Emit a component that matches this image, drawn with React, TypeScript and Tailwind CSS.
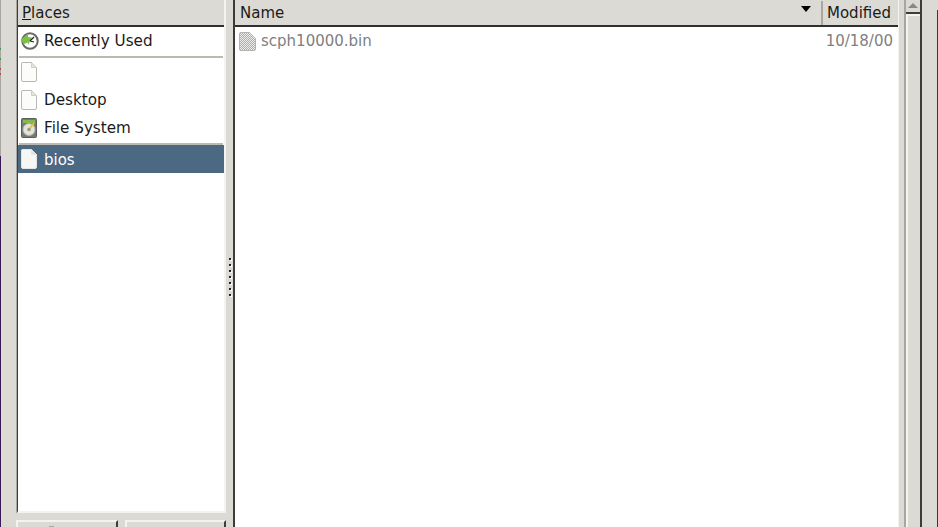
const sans = "font-['DejaVu_Sans','Liberation_Sans',sans-serif]";

const PageIcon = ({ selected }: { selected?: boolean }) => (
  <svg width="16" height="20" viewBox="0 0 16 20" className="shrink-0">
    <path
      d="M1 .5 H10.5 L15.5 5.5 V18 Q15.5 19.5 14 19.5 H2 Q.5 19.5 .5 18 V1 Z"
      fill={selected ? '#f6f6f4' : '#fcfcfb'}
      stroke={selected ? '#e2e5e8' : '#b9b8b4'}
    />
    <path d="M10.5 .5 V5.5 H15.5 Z" fill="#e4e3df" stroke={selected ? '#e2e5e8' : '#cfcec9'} />
  </svg>
);

const ClockIcon = () => (
  <svg width="19" height="18" viewBox="0 0 19 18" className="-ml-[1px] -mr-[2px] shrink-0">
    <circle cx="10" cy="9" r="7.7" fill="#fff" stroke="#676a63" strokeWidth="2" />
    <path d="M0.5 8 L8 1.5 V5 L12 5.5 L8 13 V10.5 L4 12 Z" fill="#7cc04c" />
    <path d="M10 9 L14 5 M10 9 L14 10" stroke="#222" strokeWidth="1.2" />
  </svg>
);

const DiskIcon = () => (
  <svg width="16" height="20" viewBox="0 0 16 20" className="shrink-0">
    <rect x="0.5" y="0.5" width="15" height="19" rx="1" fill="#767b73" stroke="#5a5d57" />
    <rect x="2" y="2" width="12" height="3" fill="#86b84a" />
    <circle cx="8" cy="11.5" r="6" fill="#e4e4de" stroke="#b5b5ad" />
    <path d="M8 11.5 L13 5" stroke="#e6c53a" strokeWidth="2" />
    <circle cx="8" cy="11.5" r="1.8" fill="#9a9a92" />
  </svg>
);

const BinIcon = () => (
  <svg width="17" height="19" viewBox="0 0 17 19" className="shrink-0">
    <defs>
      <pattern id="dots" width="2" height="2" patternUnits="userSpaceOnUse">
        <rect width="2" height="2" fill="#ececea" />
        <rect width="1" height="1" fill="#aeaeac" />
        <rect x="1" y="1" width="1" height="1" fill="#aeaeac" />
      </pattern>
    </defs>
    <path
      d="M2 .5 H10.5 L16.5 6.5 V17 Q16.5 18.5 15 18.5 H2 Q.5 18.5 .5 17 V2 Q.5 .5 2 .5 Z"
      fill="url(#dots)"
      stroke="#b3b3b0"
    />
  </svg>
);

const Place = ({ icon, label }: { icon: React.ReactNode; label?: string }) => (
  <div className="flex h-[28px] items-center gap-[7px] pl-[3px] text-[15.2px] leading-none text-[#1a1a1a]">
    {icon}
    {label && <span className="pt-[2px]">{label}</span>}
  </div>
);

const Separator = () => <div className="mx-[1px] h-[2px] bg-[#bcb9b2]" />;

const PaneButton = ({ glyph }: { glyph?: boolean }) => (
  <div className="h-[20px] w-[102px] border-t-2 border-l-2 border-t-[#f4f3f0] border-l-[#f4f3f0] border-r-2 border-r-[#3c3c3a]">
    {glyph && <div className="ml-[31px] mt-[4px] h-[2px] w-[5px] bg-[#a9a7a2]" />}
  </div>
);

const edgeMarks = [
  { key: 'a', className: 'h-[48px] bg-[#a8a7a2]' },
  { key: 'b', className: 'h-[2px] bg-[#3f9b3f]' },
  { key: 'c', className: 'h-[8px] bg-[#a8a7a2]' },
  { key: 'd', className: 'h-[2px] bg-[#3f9b3f]' },
  { key: 'e', className: 'h-[8px] bg-[#a8a7a2]' },
  { key: 'f', className: 'h-[2px] bg-[#b04a4a]' },
  { key: 'g', className: 'h-[3px] bg-[#a8a7a2]' },
  { key: 'h', className: 'h-[2px] bg-[#b04a4a]' },
  { key: 'i', className: 'h-[81px] bg-[#a8a7a2]' },
  { key: 'j', className: 'flex-1 bg-[#3a1a55]' },
];

export default function App() {
  return (
    <div className={`${sans} flex h-[527px] w-[938px] overflow-hidden bg-[#dcdad5]`}>
      <div className="flex w-[1px] shrink-0 flex-col">
        {edgeMarks.map((m) => (
          <div key={m.key} className={m.className} />
        ))}
      </div>
      <div className="ml-[15px] flex w-[210px] shrink-0 flex-col">
        <div className="h-[513px] shrink-0 border-l border-l-[#a8a6a0]">
          <div className="flex h-full flex-col border-l border-l-[#3c3c3a] border-b-2 border-b-[#f4f3f0] border-r-2 border-r-[#f4f3f0] bg-white">
            <div className="flex h-[27px] shrink-0 items-center border-b-2 border-b-[#2f2f2d] bg-[#dcdad5] pl-[3px] pt-[1px] text-[15px] leading-none text-[#1a1a1a]">
              <span className="ml-[1px]"><span className="underline">P</span>laces</span>
            </div>
            <Place icon={<ClockIcon />} label="Recently Used" />
            <div className="h-[1px]" />
            <Separator />
            <Place icon={<PageIcon />} />
            <Place icon={<PageIcon />} label="Desktop" />
            <Place icon={<DiskIcon />} label="File System" />
            <div className="h-[1px]" />
            <Separator />
            <div className="flex h-[28px] items-center gap-[7px] bg-[#4b6983] pl-[3px] text-[15px] leading-none text-white">
              <PageIcon selected />
              <span className="pt-[3px]">bios</span>
            </div>
          </div>
        </div>
        <div className="mt-[7px] flex gap-[7px]">
          <PaneButton glyph />
          <PaneButton />
        </div>
      </div>
      <div className="flex w-[7px] shrink-0 flex-col items-center justify-center gap-[4px] pt-[27px]">
        {[0, 1, 2, 3, 4, 5, 6].map((i) => (
          <div key={i} className="h-[2px] w-[2px] bg-[#222] shadow-[1px_1px_0_#fff]" />
        ))}
      </div>
      <div className="flex h-[527px] w-[666px] shrink-0 flex-col border-l-2 border-l-[#3c3c3a] border-r border-r-[#f4f3f0] bg-white">
        <div className="flex h-[27px] shrink-0 border-b-2 border-b-[#2f2f2d] bg-[#dcdad5] pt-[1px] text-[15px] leading-none text-[#1a1a1a]">
          <div className="relative flex flex-1 items-center pl-[5px]">
            <span>Name</span>
            <span className="absolute right-[10px] top-[5px] h-0 w-0 border-x-[5px] border-t-[6px] border-x-transparent border-t-black" />
          </div>
          <div className="flex w-[77px] items-center border-l-2 border-l-[#a8a6a0] pl-[4px]">Modified</div>
        </div>
        <div className="flex h-[28px] items-center justify-between pl-[4px] pr-[5px] text-[15px] leading-none text-[#808080]">
          <div className="flex items-center gap-[5px]">
            <BinIcon />
            <span>scph10000.bin</span>
          </div>
          <span>10/18/00</span>
        </div>
      </div>
      <div className="ml-[5px] flex w-[18px] shrink-0 flex-col border-x-2 border-l-[#a8a6a0] border-r-[#3c3c3a] bg-[#dcdad5]">
        <div className="flex h-[14px] shrink-0 items-start justify-center border-b-2 border-b-[#3c3c3a] pt-[3px]">
          <span className="h-0 w-0 border-x-[5px] border-b-[5px] border-x-transparent border-b-[#8a8883]" />
        </div>
        <div className="flex-1 border-t-2 border-l-2 border-t-[#f4f3f0] border-l-[#f4f3f0]" />
      </div>
      <div className="ml-auto flex w-[1px] shrink-0 flex-col">
        <div className="h-[10px]" />
        <div className="flex-1 bg-[#5a1a6e]" />
      </div>
    </div>
  );
}
